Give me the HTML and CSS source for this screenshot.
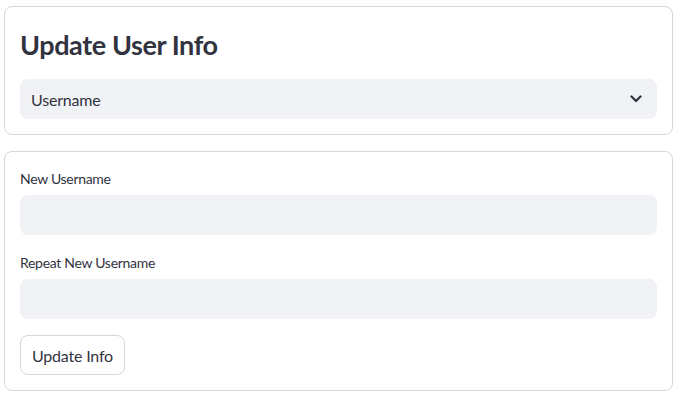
FILE: index.html
```html
<!DOCTYPE html>
<html lang="en">
<head>
<meta charset="utf-8">
<title>Update User Info</title>
<link rel="stylesheet" href="styles.css">
</head>
<body>
<main class="page">
  <section class="card">
    <h3 class="title">Update User Info</h3>
    <div class="select">
      <span class="select-value">Username</span>
      <svg class="chevron" width="12" height="8" viewBox="0 0 12 8" aria-hidden="true">
        <path d="M1.5 1.5 L6 6 L10.5 1.5" fill="none" stroke="#31333f" stroke-width="2.2" stroke-linecap="round" stroke-linejoin="round"/>
      </svg>
    </div>
  </section>
  <section class="card">
    <div class="field">
      <label class="label">New Username</label>
      <div class="input"></div>
    </div>
    <div class="field">
      <label class="label">Repeat New Username</label>
      <div class="input"></div>
    </div>
    <div>
      <button class="btn" type="button">Update Info</button>
    </div>
  </section>
</main>
</body>
</html>
```
FILE: styles.css
```css
html, body {
  margin: 0;
  padding: 0;
  background: #ffffff;
}
body {
  font-family: "Lato", "Noto Sans", sans-serif;
  color: #31333f;
}
.page {
  display: flex;
  flex-direction: column;
  gap: 16px;
  padding: 6px 8px 0 4px;
}
.card {
  border: 1px solid #d6d6d9;
  border-radius: 8px;
  padding: 15px;
  display: flex;
  flex-direction: column;
  gap: 16px;
}
.title {
  margin: 0;
  padding-top: 5px;
  font-size: 27px;
  font-weight: 700;
  line-height: 36px;
  letter-spacing: -0.4px;
}
.select {
  height: 40px;
  background: #f0f2f6;
  border-radius: 8px;
  display: flex;
  align-items: center;
  justify-content: space-between;
  padding: 0 15px 0 11px;
  box-sizing: border-box;
}
.select-value {
  font-size: 16px;
  letter-spacing: -0.2px;
}
.chevron {
  display: block;
}
.field {
  display: flex;
  flex-direction: column;
}
.label {
  font-size: 14px;
  line-height: 24px;
  margin-bottom: 4px;
  letter-spacing: -0.3px;
}
.input {
  height: 40px;
  background: #f0f2f6;
  border-radius: 8px;
}
.btn {
  font-family: inherit;
  font-size: 16px;
  letter-spacing: -0.2px;
  color: #31333f;
  background: #ffffff;
  border: 1px solid #d6d6d9;
  border-radius: 8px;
  height: 40px;
  padding: 0 11px;
}
```
